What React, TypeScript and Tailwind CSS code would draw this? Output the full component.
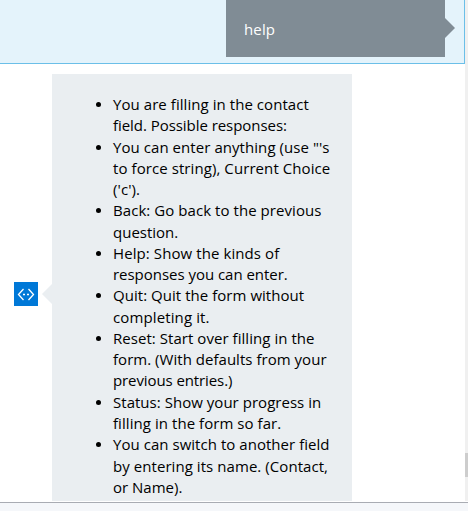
type Line = { text: string; tracking: string };

const items: Line[][] = [
  [
    { text: 'You are filling in the contact', tracking: 'tracking-[0.06px]' },
    { text: 'field. Possible responses:', tracking: 'tracking-[-0.05px]' },
  ],
  [
    { text: "You can enter anything (use \"'s", tracking: 'tracking-[0.06px]' },
    { text: 'to force string), Current Choice', tracking: 'tracking-[0.08px]' },
    { text: "('c').", tracking: 'tracking-[0.1px]' },
  ],
  [
    { text: 'Back: Go back to the previous', tracking: 'tracking-[0.06px]' },
    { text: 'question.', tracking: 'tracking-normal' },
  ],
  [
    { text: 'Help: Show the kinds of', tracking: 'tracking-[0.09px]' },
    { text: 'responses you can enter.', tracking: 'tracking-[-0.03px]' },
  ],
  [
    { text: 'Quit: Quit the form without', tracking: 'tracking-[0.04px]' },
    { text: 'completing it.', tracking: 'tracking-[0.12px]' },
  ],
  [
    { text: 'Reset: Start over filling in the', tracking: 'tracking-[0.05px]' },
    { text: 'form. (With defaults from your', tracking: 'tracking-[0.03px]' },
    { text: 'previous entries.)', tracking: 'tracking-[-0.1px]' },
  ],
  [
    { text: 'Status: Show your progress in', tracking: 'tracking-[0.03px]' },
    { text: 'filling in the form so far.', tracking: 'tracking-[0.06px]' },
  ],
  [
    { text: 'You can switch to another field', tracking: 'tracking-[0.04px]' },
    { text: 'by entering its name. (Contact,', tracking: 'tracking-[0.06px]' },
    { text: 'or Name).', tracking: 'tracking-normal' },
  ],
];

function UserMessage() {
  return (
    <div className="flex h-16 shrink-0 justify-end border-r border-b border-[#6bbfe8] bg-[#e4f3fb] pr-[9px]">
      <div className="flex h-[57px] w-[219px] items-start bg-[#808c95] pt-[18px] pl-[18px] text-white">
        <span className="leading-[22px] tracking-[0.15px]">help</span>
      </div>
      <svg className="mt-[18px] h-5 w-2.5" viewBox="0 0 10 20" fill="#808c95">
        <path d="M0 0l10 10L0 20z" />
      </svg>
    </div>
  );
}

function BotMessage() {
  return (
    <div className="mt-2.5 flex h-[427px] shrink-0 overflow-hidden">
      <div className="mt-52 ml-3.5 h-6 w-6 shrink-0 bg-[#0078d7]">
        <svg className="h-6 w-6" viewBox="0 0 24 24" fill="none" stroke="white" strokeWidth="1.3">
          <path d="M9.5 7L4.5 12.5L9.5 18M14.5 7L19.5 12.5L14.5 18M9 12.5h2M13 12.5h2" />
        </svg>
      </div>
      <svg className="mt-[210px] ml-1 h-5 w-2.5 shrink-0" viewBox="0 0 10 20" fill="#eaeef1">
        <path d="M10 0L0 10l10 10z" />
      </svg>
      <div className="w-[300px] shrink-0 bg-[#eaeef1] pt-5">
        <ul className="pl-[61px] text-black">
          {items.map((lines) => (
            <li key={lines[0].text} className="relative">
              <span className="absolute top-[8px] -left-[17px] h-[5px] w-[5px] rounded-full bg-black" />
              {lines.map(({ text, tracking }) => (
                <div key={text} className={`h-[21.28px] leading-[21.28px] whitespace-nowrap ${tracking}`}>
                  {text}
                </div>
              ))}
            </li>
          ))}
        </ul>
      </div>
    </div>
  );
}

export default function App() {
  return (
    <div className="flex h-[511px] w-[468px] flex-col overflow-hidden bg-white font-['Open_Sans',sans-serif] text-[15px]">
      <div className="flex h-[501px]">
        <main className="flex w-[465px] flex-col">
          <UserMessage />
          <BotMessage />
        </main>
        <div className="h-[501px] w-[3px] bg-[#f0f0f0] pt-[453px]">
          <div className="h-6 bg-[#cdcdcd]" />
        </div>
      </div>
      <footer className="mt-px h-[9px] border-t border-[#a9acb3] bg-[#f5f7fa]" />
    </div>
  );
}
